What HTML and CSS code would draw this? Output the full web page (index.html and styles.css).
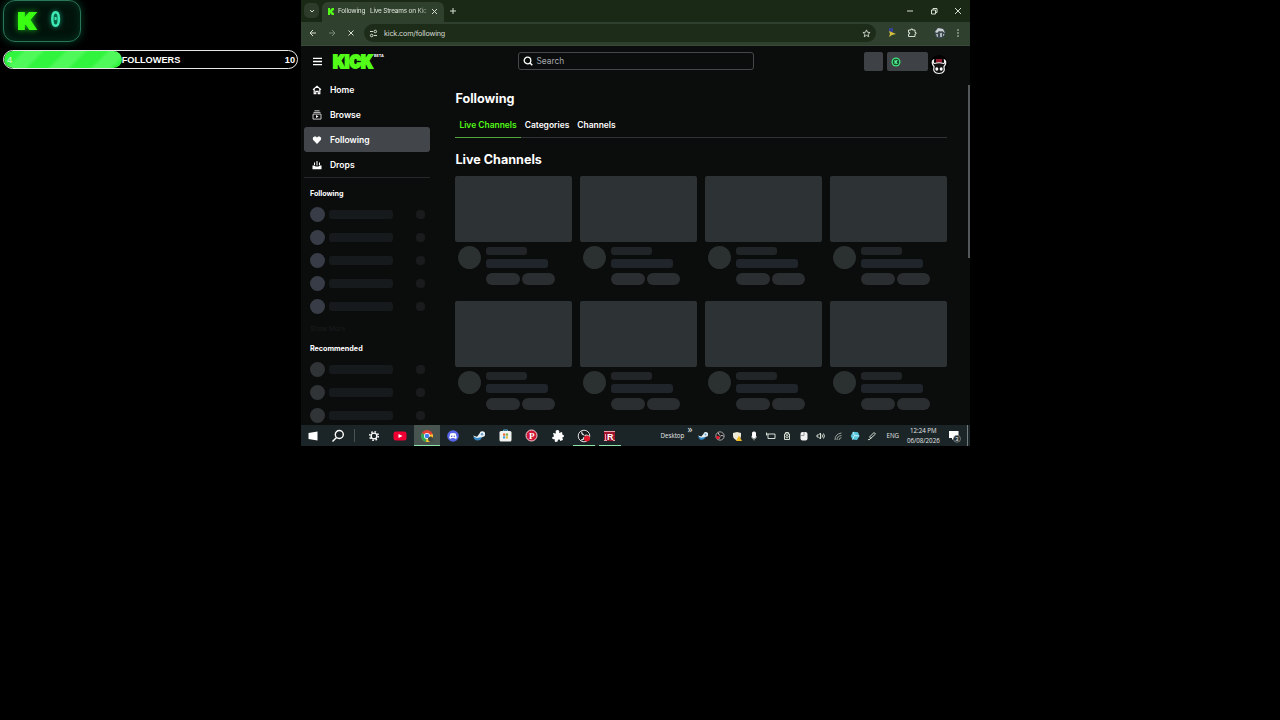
FILE: index.html
```
<!DOCTYPE html>
<html lang="en">
<head>
    <meta charset="UTF-8">
    <meta name="viewport" content="width=device-width, initial-scale=1.0">
    <title>Stream Scene</title>
    <link rel="stylesheet" href="styles.css">
</head>
<body>

    <aside class="widgets">
        <div class="counter">
            <svg class="counter-logo" width="22" height="28" viewBox="0 0 22 28"><text x="2" y="22" textLength="18" lengthAdjust="spacingAndGlyphs">K</text></svg>
            <span>0</span>
        </div>
        <div class="goal">
            <div class="goal-fill"></div>
            <div class="goal-text"><span>4</span><span>FOLLOWERS</span><span>10</span></div>
        </div>
    </aside>

    <div class="desktop">
        <div class="titlebar">
            <div class="tab-menu"><svg width="8" height="8" viewBox="0 0 8 8"><path class="line" d="M2 3l2 2 2-2"/></svg></div>
            <div class="tab">
                <svg width="8" height="9" viewBox="0 0 8 9"><path fill="#53fc18" d="M1 1h2v2l2-2h2v2L5 4.500l2 2V8H5L3 6v2H1z"/></svg>
                <span class="tab-title">Following &nbsp; Live Streams on Kic</span>
                <svg width="7" height="7" viewBox="0 0 7 7"><path class="line" d="M1 1l5 5M6 1L1 6"/></svg>
            </div>
            <svg class="new-tab" width="8" height="8" viewBox="0 0 8 8"><path class="line" d="M4 1v6M1 4h6"/></svg>
            <div class="window-buttons">
                <svg width="8" height="8" viewBox="0 0 8 8"><path class="line" d="M1 4h6"/></svg>
                <svg width="8" height="8" viewBox="0 0 8 8"><path class="line" d="M1.500 3h4v4h-4zM3 3V1.500h4v4H5.500"/></svg>
                <svg width="8" height="8" viewBox="0 0 8 8"><path class="line" d="M1 1l6 6M7 1L1 7"/></svg>
            </div>
        </div>

        <div class="toolbar">
            <svg width="8" height="8" viewBox="0 0 8 8"><path class="line" d="M7 4H1M4 1L1 4l3 3"/></svg>
            <svg class="dim" width="8" height="8" viewBox="0 0 8 8"><path class="line" d="M1 4h6M4 1l3 3-3 3"/></svg>
            <svg width="8" height="8" viewBox="0 0 8 8"><path class="line" d="M1.500 1.500l5 5M6.500 1.500l-5 5"/></svg>
            <div class="address">
                <svg width="9" height="9" viewBox="0 0 9 9"><path class="line" d="M1 2.500h3M5 6.500h3"/><circle class="line" cx="6.300" cy="2.500" r="1.300"/><circle class="line" cx="2.700" cy="6.500" r="1.300"/></svg>
                <span>kick.com/following</span>
                <svg class="star" width="9" height="9" viewBox="0 0 10 10"><path class="line" d="M5 1l1.100 2.600 2.900.3-2.200 1.900.7 2.800L5 7.100 2.500 8.600l.7-2.800L1 3.900l2.900-.3z"/></svg>
            </div>
            <div class="extensions">
                <svg width="10" height="10" viewBox="0 0 10 10"><path fill="#34418f" d="M2 0h4v4H2z"/><path fill="#d8c33c" d="M2 3l7 3-4 1-3 2 1-3z"/></svg>
                <svg width="10" height="10" viewBox="0 0 10 10"><path class="line" d="M1.500 2H4V1h1.500v1H8v2.500h1V6H8v2.500H1.500V6h1V4.500h-1z"/></svg>
                <svg width="12" height="12" viewBox="0 0 12 12"><circle cx="6" cy="6" r="5.500" fill="#3c4850"/><path fill="#c9d0cf" d="M1 5l3-4 5 1 2 4-3-2-1 .5L5 4 3 6z"/><path fill="#aab3b5" d="M2 7h2v3H3zM6 6h2v4H6zM9 7h1.500L9.500 9H9z"/></svg>
                <svg width="4" height="10" viewBox="0 0 4 10" fill="#d5ddd2"><circle cx="2" cy="2" r=".8"/><circle cx="2" cy="5" r=".8"/><circle cx="2" cy="8" r=".8"/></svg>
            </div>
        </div>

        <div class="page">
            <header class="kick-header">
                <svg class="burger" width="9" height="9" viewBox="0 0 9 9" fill="#fff"><path d="M0 .7h9v1.400H0zM0 3.800h9v1.400H0zM0 6.900h9v1.400H0z"/></svg>
                <svg class="kick-logo" width="42" height="20" viewBox="0 0 42 20"><text x="1" y="16" textLength="40" lengthAdjust="spacingAndGlyphs">KICK</text></svg>
                <sup>BETA</sup>
                <div class="search">
                    <svg width="10" height="10" viewBox="0 0 10 10"><circle cx="4.500" cy="4.500" r="3.300" fill="none" stroke="#fff" stroke-width="1.300"/><path d="M7 7l2.300 2.300" stroke="#fff" stroke-width="1.500"/></svg>
                    <span>Search</span>
                </div>
                <div class="header-box"></div>
                <div class="header-box wide">
                    <svg width="10" height="10" viewBox="0 0 10 10"><circle cx="5" cy="5" r="4.500" fill="#42e27c"/><circle cx="5" cy="5" r="3.200" fill="#164e2f"/><path d="M3.500 3h1v1.200L5.500 3h1.300L5.500 5l1.300 2H5.500l-1-1.200V7h-1z" fill="#59f59a"/></svg>
                </div>
                <svg class="avatar" width="20" height="22" viewBox="0 0 20 22">
                    <circle cx="10" cy="9" r="9" fill="#000"/>
                    <path d="M7 4h6v4H7z" fill="#8e1c2d"/>
                    <path d="M4.500 5C2.500 6 3 9.500 5 11.500 4 16 5.500 18.500 10 18.500s6-2.500 5-7C17 9.500 17.500 6 15.500 5c.5 2 0 3.500-1 3.500-3-1-6-1-9 0-1 0-1.500-1.500-1-3.500z" fill="#111" stroke="#f1f1f1" stroke-width="1.200"/>
                    <ellipse cx="7.800" cy="14" rx="1.500" ry="1.800" fill="#fff"/><ellipse cx="12.200" cy="14" rx="1.500" ry="1.800" fill="#fff"/>
                </svg>
            </header>

            <div class="content">
                <nav class="sidebar">
                    <div class="nav-item">
                        <svg width="10" height="10" viewBox="0 0 10 10"><path d="M1 4.600L5 1.200l4 3.400M2.200 4v4.600h1.600V6.300h2.400v2.300h1.600V4" fill="none" stroke="#fff" stroke-width="1.200"/></svg>
                        <span>Home</span>
                    </div>
                    <div class="nav-item">
                        <svg width="10" height="10" viewBox="0 0 10 10"><path d="M2.500.8h5M1.500 2.400h7M1 4.100h8v5H1z" fill="none" stroke="#ddd" stroke-width=".9"/><path d="M4 5l2.500 1.500L4 8z" fill="#fff"/></svg>
                        <span>Browse</span>
                    </div>
                    <div class="nav-item active">
                        <svg width="10" height="10" viewBox="0 0 10 10"><path d="M5 9L1.700 5.600C0 3.800 1 1.500 3 1.500c1 0 1.600.5 2 1.200.4-.7 1-1.200 2-1.200 2 0 3 2.300 1.300 4.100z" fill="#fff"/></svg>
                        <span>Following</span>
                    </div>
                    <div class="nav-item">
                        <svg width="10" height="10" viewBox="0 0 10 10" fill="#fff"><path d="M.5 5.500h2l1 1h3l1-1h2v3.700h-9zM4.500 1h1v4.500h-1zM2 2.500h1V5H2zM7 2.500h1V5H7z"/></svg>
                        <span>Drops</span>
                    </div>
                    <h3 class="first">Following</h3>
                    <div class="channel"><i></i><b></b><em></em></div>
                    <div class="channel"><i></i><b></b><em></em></div>
                    <div class="channel"><i></i><b></b><em></em></div>
                    <div class="channel"><i></i><b></b><em></em></div>
                    <div class="channel"><i></i><b></b><em></em></div>
                    <div class="show-more">Show More</div>
                    <h3>Recommended</h3>
                    <div class="channel grey"><i></i><b></b><em></em></div>
                    <div class="channel grey"><i></i><b></b><em></em></div>
                    <div class="channel grey"><i></i><b></b><em></em></div>
                </nav>

                <main>
                    <h1>Following</h1>
                    <div class="tabs">
                        <span class="selected">Live Channels</span>
                        <span>Categories</span>
                        <span>Channels</span>
                    </div>
                    <h2>Live Channels</h2>
                    <div class="cards">
                        <div class="card"><div class="thumb"></div><div class="info"><i></i><div class="lines"><b></b><b class="long"></b><div class="pills"><u></u><u></u></div></div></div></div>
                        <div class="card"><div class="thumb"></div><div class="info"><i></i><div class="lines"><b></b><b class="long"></b><div class="pills"><u></u><u></u></div></div></div></div>
                        <div class="card"><div class="thumb"></div><div class="info"><i></i><div class="lines"><b></b><b class="long"></b><div class="pills"><u></u><u></u></div></div></div></div>
                        <div class="card"><div class="thumb"></div><div class="info"><i></i><div class="lines"><b></b><b class="long"></b><div class="pills"><u></u><u></u></div></div></div></div>
                        <div class="card"><div class="thumb"></div><div class="info"><i></i><div class="lines"><b></b><b class="long"></b><div class="pills"><u></u><u></u></div></div></div></div>
                        <div class="card"><div class="thumb"></div><div class="info"><i></i><div class="lines"><b></b><b class="long"></b><div class="pills"><u></u><u></u></div></div></div></div>
                        <div class="card"><div class="thumb"></div><div class="info"><i></i><div class="lines"><b></b><b class="long"></b><div class="pills"><u></u><u></u></div></div></div></div>
                        <div class="card"><div class="thumb"></div><div class="info"><i></i><div class="lines"><b></b><b class="long"></b><div class="pills"><u></u><u></u></div></div></div></div>
                    </div>
                </main>
                <div class="scrollbar"></div>
            </div>
        </div>

        <footer class="taskbar">
            <div class="app"><svg width="10" height="10" viewBox="0 0 10 10" fill="#fff"><path d="M.5 2L9.500.6v8.800L.5 8z"/></svg></div>
            <div class="app"><svg width="14" height="14" viewBox="0 0 14 14" fill="none" stroke="#fff" stroke-width="1.400"><circle cx="8.300" cy="5.500" r="4"/><path d="M5.500 8.500L1.500 12.500"/></svg></div>
            <div class="divider"></div>
            <div class="app"><svg width="12" height="12" viewBox="0 0 12 12" fill="none" stroke="#fff"><circle cx="6" cy="6" r="2.900" stroke-width="1.400"/><circle cx="6" cy="6" r="4.300" stroke-width="1.500" stroke-dasharray="1.600 1.777"/></svg></div>
            <div class="app"><svg width="14" height="10" viewBox="0 0 14 10"><rect x=".5" y=".5" width="13" height="9" rx="2.500" fill="#f00032"/><path d="M5.500 3l4 2-4 2z" fill="#fff"/></svg></div>
            <div class="app open current"><svg width="14" height="14" viewBox="0 0 14 14"><circle cx="7" cy="7" r="6" fill="#e34133"/><path d="M7 7L1.800 4A6 6 0 0 0 7 13z" fill="#31a853"/><path d="M7 7l5.600-2A6 6 0 0 1 6 13z" fill="#f9c52c"/><circle cx="7" cy="7" r="3" fill="#fff"/><circle cx="7" cy="7" r="2.300" fill="#3f80ed"/><circle cx="10.500" cy="10" r="2.500" fill="#3b4740"/></svg></div>
            <div class="app"><svg width="12" height="12" viewBox="0 0 12 12"><circle cx="6" cy="6" r="5.800" fill="#5865e8"/><path d="M3.300 3.600Q6 2.600 8.700 3.600L9.800 8 8 9l-.6-.9H4.600L4 9 2.200 8z" fill="#fff"/><circle cx="4.700" cy="6.300" r=".8" fill="#5865e8"/><circle cx="7.300" cy="6.300" r=".8" fill="#5865e8"/></svg></div>
            <div class="app"><svg width="12" height="12" viewBox="0 0 12 12"><use href="#steam"/></svg></div>
            <div class="app"><svg width="13" height="13" viewBox="0 0 13 13"><path d="M4.500 3V1h4v2" fill="none" stroke="#54b5e8"/><rect x=".5" y="2" width="12" height="10.500" rx="1.500" fill="#f2f2ef"/><path d="M4 4.500h2.200v2.200H4z" fill="#e8683f"/><path d="M6.800 4.500H9v2.200H6.800z" fill="#7eb343"/><path d="M4 7.300h2.200v2.200H4z" fill="#429fd8"/><path d="M6.800 7.300H9v2.200H6.800z" fill="#e9b93c"/></svg></div>
            <div class="app"><svg width="13" height="13" viewBox="0 0 13 13"><circle cx="6.500" cy="6.500" r="5.500" fill="#cf1738" stroke="#f5dfe3" stroke-width=".9"/><text x="3.900" y="9.800" class="pin">P</text></svg></div>
            <div class="app"><svg width="14" height="14" viewBox="0 0 14 14"><path d="M2 4l3 .5C4 2 5 1 6.500 1S9 2.500 8 4l3-1 .5 3c2-1 2 3-.3 2.300L12 11l-3 1c.3-2-2.500-2-2.300.5L4 13l-.5-3C1 11 0 8 3 7.500z" fill="#fff"/></svg></div>
            <div class="app open"><svg width="14" height="14" viewBox="0 0 14 14"><use href="#obs"/><circle cx="10" cy="9.500" r="3" fill="#e5182c"/></svg></div>
            <div class="app open"><svg width="13" height="12" viewBox="0 0 13 12"><path d="M1 1h11v10H1z" fill="#9e152c"/><text x="4" y="9.500" class="r-mark">R</text><path d="M1 1.500h11M1 10.500h3M10 10.500h2M2.500 4v6" stroke="#f0a0aa"/></svg></div>

            <div class="tray">
                <span class="toolbar-label">Desktop<sup>»</sup></span>
                <svg width="10" height="10" viewBox="0 0 12 12"><use href="#steam"/></svg>
                <svg width="10" height="10" viewBox="0 0 14 14"><use href="#obs"/><circle cx="4" cy="9" r="2.500" fill="#e5182c"/></svg>
                <svg width="10" height="10" viewBox="0 0 10 10"><path d="M1 2l4-1 4 1v3c0 2-2 4-4 4.500C3 9 1 7 1 5z" fill="#ece9d7"/><path d="M7 4.500L10 10H4z" fill="#f1bd25"/></svg>
                <svg width="10" height="10" viewBox="0 0 10 10"><rect x="3" y=".5" width="4" height="7" rx="1.700" fill="#fff"/><path d="M2.500 5q0 3 2.500 3t2.500-3M5 8v1.500" stroke="#bbb" fill="none" stroke-width=".7"/></svg>
                <svg width="10" height="10" viewBox="0 0 10 10"><path class="line" d="M2 3h7v4.500H2zM.5 1.500v3M.5 3H2"/></svg>
                <svg width="10" height="10" viewBox="0 0 10 10"><path class="line" d="M2.500 3h5v5.500h-5zM3.500 3V1.500h3V3"/><circle class="line" cx="5" cy="5.700" r="1.200"/></svg>
                <svg width="10" height="10" viewBox="0 0 10 10"><rect x="1.500" y="1" width="7" height="8.500" rx="2" fill="#f1f1f1"/><path d="M5 1v3.500M1.500 4.500H5" stroke="#777" stroke-width=".7"/></svg>
                <svg width="10" height="10" viewBox="0 0 10 10"><path class="line" d="M1 4h1.500l2-2v6l-2-2H1zM6 3.500q1 1.500 0 3M7.500 2.500q1.800 2.500 0 5"/></svg>
                <svg class="wifi" width="10" height="10" viewBox="0 0 10 10"><path class="line" d="M2 9Q2 3 8.500 2M4 9q0-4 4.500-4.500M6 9q0-2 2.500-2.300"/></svg>
                <svg width="10" height="10" viewBox="0 0 10 10"><path d="M3 .8l5 .5L9.500 5 7 9l-4.500-.5L.7 5z" fill="#57c5de"/><path d="M3 1l1.500 3.500L9 5M4.500 4.500l-2 4" stroke="#c8f1fa" fill="none"/></svg>
                <svg width="10" height="10" viewBox="0 0 10 10"><path class="line" d="M1 8.500q1 .8 2-.5l5.500-5-1.500-1.500L2.500 6 4 7.500"/></svg>
                <span class="lang">ENG</span>
                <div class="clock">12:24 PM<br>06/08/2026</div>
                <svg class="notice" width="13" height="14" viewBox="0 0 13 14"><path d="M1 2h9.500v7H6l-2 2V9H1z" fill="#fff"/><circle cx="9" cy="9.800" r="3.500" fill="#20292a" stroke="#aaa" stroke-width=".6"/><text x="7.300" y="12" class="badge">3</text></svg>
                <div class="show-desktop"></div>
            </div>
        </footer>
    </div>

    <!-- icons used in both the taskbar and the tray -->
    <svg class="defs" width="0" height="0">
        <symbol id="steam" overflow="visible"><path d="M0 5.500l4 1.200L6.500 3.500A2.900 2.900 0 1 1 9.500 7L6 9.500 3 9z" fill="#e6f1f8"/><path d="M.3 6.500L4 8l3-.5L9 7q-1 3.500-4.500 3.500T.3 6.500z" fill="#3487c4"/><circle cx="9" cy="4.200" r="1.200" fill="#6a9dc4"/></symbol>
        <symbol id="obs" overflow="visible"><circle cx="7" cy="7" r="5.800" fill="#1b1b1d" stroke="#ddd"/><path d="M7 6Q4 5 5 2.500M7.500 7Q10 5 12 7.500M7 8q0 3-3 3" fill="none" stroke="#ddd" stroke-width="1.200"/></symbol>
    </svg>

</body>
</html>
```
FILE: styles.css
```
* {
    box-sizing: border-box;
}
body {
    margin: 0;
    height: 720px;
    background-color: #000;
    color: white;
    font-family: Inter, 'Liberation Sans', sans-serif;
    display: flex;
    align-items: flex-start;
    overflow: hidden;
}
svg {
    display: block;
    flex: none;
}
h1, h2, h3 {
    margin: 0;
}
.line {
    fill: none;
    stroke: #d5ddd2;
    stroke-width: 1;
}
.dim {
    opacity: 0.45;
}
.wifi {
    opacity: 0.7;
}
.defs {
    position: absolute;
}

/* stream widgets */
.widgets {
    width: 301px;
    flex: none;
    padding: 0 3px;
}
.counter {
    width: 78px;
    height: 42px;
    border: 1px solid #2b7558;
    border-radius: 12px;
    background-color: #02130c;
    box-shadow: 0 0 9px #04442a, inset 0 0 8px #04341f;
    display: flex;
    align-items: center;
    padding-left: 12px;
    gap: 11px;
}
.counter-logo text {
    font: 900 22px Inter, sans-serif;
    fill: #3aff12;
    stroke: #3aff12;
    stroke-width: 2px;
}
.counter-logo {
    overflow: visible;
    filter: drop-shadow(0 0 3px #16c51a);
}
.counter span {
    font: bold 22px 'Liberation Mono', monospace;
    color: #3de8b4;
    text-shadow: 0 0 5px #0fae7a;
    transform: scale(0.85, 1.08);
}
.goal {
    margin-top: 8px;
    height: 19px;
    border: 1px solid #e8e8e8;
    border-radius: 10px;
    display: grid;
    overflow: hidden;
}
.goal > div {
    grid-area: 1 / 1;
}
.goal-fill {
    width: 118px;
    border-radius: 9px;
    background: repeating-linear-gradient(135deg, #31f43f 0, #31f43f 12px, #50f95a 16px, #50f95a 26px, #31f43f 30px);
}
.goal-text {
    display: grid;
    grid-template-columns: 1fr auto 1fr;
    align-items: center;
    padding: 0 2px 0 3px;
    font: bold 9.2px 'Liberation Sans', sans-serif;
}
.goal-text span:first-child {
    color: #b9f7ba;
}
.goal-text span:last-child {
    text-align: right;
}

/* browser */
.desktop {
    width: 669px;
    height: 446px;
    flex: none;
    background-color: #0b0c0c;
    display: flex;
    flex-direction: column;
}
.titlebar {
    height: 22px;
    background-color: #1a2915;
    display: flex;
    align-items: center;
    padding-left: 3px;
}
.tab-menu {
    width: 15px;
    height: 15px;
    margin-top: -1px;
    border-radius: 5px;
    background-color: #2d3b2b;
    display: flex;
    align-items: center;
    justify-content: center;
}
.tab {
    width: 122px;
    height: 20px;
    margin: 2px 0 0 3px;
    padding: 0 4px 2px 5px;
    border-radius: 6px 6px 0 0;
    background-color: #2f402d;
    display: flex;
    align-items: center;
    gap: 3px;
}
.tab-title {
    width: 90px;
    white-space: nowrap;
    font-size: 6.5px;
    letter-spacing: -0.22px;
    color: #dce4d9;
    mask-image: linear-gradient(90deg, #000 88%, rgba(0, 0, 0, 0.3));
}
.new-tab {
    margin: -1px 0 0 5px;
}
.window-buttons {
    margin: -1px 8px 0 auto;
    display: flex;
    gap: 16px;
}
.toolbar {
    height: 24px;
    background-color: #2f412e;
    border-bottom: 1px solid #3a4a39;
    display: flex;
    align-items: center;
    padding: 0 0 1px 8px;
    gap: 11px;
}
.address {
    width: 514px;
    height: 18px;
    margin-left: -2px;
    padding: 0 5px 0 5px;
    border-radius: 9px;
    background-color: #1d2b19;
    display: flex;
    align-items: center;
    gap: 6px;
    font-size: 7.2px;
    letter-spacing: -0.15px;
    color: #d5ddd2;
}
.star {
    margin-left: auto;
}
.extensions {
    display: flex;
    align-items: center;
    margin-left: auto;
    margin-right: 10px;
    gap: 10px;
}
.extensions svg:nth-child(3) {
    margin-left: 7px;
}

/* kick */
.page {
    height: 379px;
    overflow: hidden;
}
.kick-header {
    height: 31px;
    display: flex;
    align-items: center;
    padding-left: 12px;
}
.kick-logo {
    margin-left: 10px;
    overflow: visible;
}
.kick-logo text {
    font: 900 17px Inter, sans-serif;
    fill: #53fc18;
    stroke: #53fc18;
    stroke-width: 1.8px;
}
.kick-header sup {
    width: 12px;
    margin-top: -11px;
    font-size: 3.8px;
    font-weight: bold;
    line-height: 1;
}
.search {
    width: 236px;
    height: 18px;
    margin: -1px 0 0 132px;
    padding-left: 4px;
    border: 1px solid #45474a;
    border-radius: 3px;
    display: flex;
    align-items: center;
    gap: 3.5px;
    font-size: 8.4px;
    color: #a5a8ac;
}
.header-box {
    width: 19px;
    height: 19px;
    margin-left: 110px;
    border-radius: 2px;
    background-color: #3e4146;
    display: flex;
    align-items: center;
    padding-left: 4px;
}
.header-box.wide {
    width: 41px;
    margin-left: 4px;
}
.avatar {
    margin: 9px 0 0 1px;
}
.content {
    display: flex;
    height: 348px;
}
.sidebar {
    width: 126px;
    margin-left: 3.4px;
    flex: none;
}
.nav-item {
    height: 25px;
    display: flex;
    align-items: center;
    gap: 7.5px;
    padding-left: 8px;
    border-radius: 3px;
    font-size: 8.6px;
    font-weight: 600;
}
.nav-item.active {
    background-color: #42464a;
}
.sidebar h3 {
    padding-left: 5.5px;
    font-size: 7.2px;
    font-weight: 700;
    line-height: 10px;
    margin: 10px 0 4px;
}
.sidebar h3.first {
    padding-top: 11px;
    margin-top: 0;
    border-top: 1px solid #26292b;
}
.channel {
    height: 23px;
    display: flex;
    align-items: center;
    padding-left: 5.5px;
}
.channel i {
    width: 15px;
    height: 15px;
    border-radius: 50%;
    background-color: #383c46;
}
.channel b {
    width: 64px;
    height: 9px;
    margin-left: 4px;
    border-radius: 3px;
    background-color: #171a1d;
}
.channel em {
    width: 9px;
    height: 9px;
    margin-left: 23px;
    border-radius: 4px;
    background-color: #191b1d;
}
.channel.grey i {
    background-color: #303437;
}
.show-more {
    height: 16px;
    padding: 6px 0 0 5.5px;
    font-size: 6.6px;
    line-height: 10px;
    color: #1b1d1f;
}
main {
    width: 492px;
    margin-left: 25px;
    flex: none;
}
h1, h2 {
    font-size: 12.6px;
    font-weight: 700;
    line-height: 16px;
}
h1 {
    margin-top: 14px;
}
.tabs {
    height: 31px;
    display: flex;
    border-bottom: 1px solid #303335;
    font-size: 8.45px;
    font-weight: 600;
    line-height: 37px;
}
.tabs span {
    height: 31px;
    padding: 0 4px;
    white-space: nowrap;
}
.tabs .selected {
    color: #53fc18;
    border-bottom: 1px solid #53a83d;
}
h2 {
    margin-top: 14px;
}
.cards {
    margin-top: 8px;
    display: grid;
    grid-template-columns: repeat(4, 117px);
    column-gap: 8px;
}
.card {
    height: 125px;
}
.thumb {
    height: 66px;
    border-radius: 2px;
    background-color: #2d3234;
}
.info {
    display: flex;
    padding: 4px 0 0 3px;
    gap: 5px;
}
.info i {
    width: 23px;
    height: 23px;
    border-radius: 50%;
    background-color: #2b3031;
}
.lines b {
    display: block;
    width: 41px;
    height: 8px;
    margin-top: 1px;
    border-radius: 3px;
    background-color: #222527;
}
.lines b.long {
    width: 62px;
    height: 9px;
    margin-top: 4px;
    background-color: #20252b;
}
.pills {
    display: flex;
    gap: 2px;
    margin-top: 5px;
}
.pills u {
    width: 33.3px;
    height: 12px;
    border-radius: 6px;
    background-color: #2a2e30;
}
.scrollbar {
    width: 2px;
    height: 173px;
    margin: 8px 0 0 auto;
    background-color: #55585a;
}

/* windows taskbar */
.taskbar {
    height: 21px;
    background-color: #1b2426;
    display: flex;
}
.app {
    width: 26.2px;
    height: 21px;
    flex: none;
    display: flex;
    align-items: center;
    justify-content: center;
}
.app:first-child {
    width: 24px;
}
.divider {
    width: 1px;
    height: 13px;
    margin: 4px 6px 0 3px;
    background-color: #495153;
}
.app.open {
    box-shadow: inset 0 -1px #8ce4aa;
}
.app.open:nth-last-child(-n+3) {
    width: 22.2px;
    margin: 0 2px;
}
.app.current {
    background-color: #48544f;
}
.pin {
    font: bold 9px 'Liberation Serif', serif;
    fill: white;
}
.r-mark {
    font: bold 9px 'Liberation Sans', sans-serif;
    fill: white;
}
.badge {
    font: 6px 'Liberation Sans', sans-serif;
    fill: white;
}
.tray {
    margin-left: auto;
    display: flex;
    align-items: center;
    gap: 6.85px;
    font-family: 'Open Sans', sans-serif;
    font-size: 6.2px;
    color: #e4e7e7;
}
.toolbar-label {
    display: flex;
    align-items: center;
    margin-right: -1px;
}
.toolbar-label sup {
    font-size: 10px;
    line-height: 8px;
    margin: -13px 0 0 3px;
}
.lang {
    margin-left: 3px;
    width: 13px;
}
.clock {
    width: 34px;
    font-size: 6.2px;
    line-height: 10px;
    text-align: center;
}
.notice {
    margin-left: 1px;
}
.show-desktop {
    width: 3px;
    height: 21px;
    margin-left: -1px;
    border-left: 1px solid #747d7e;
}
```
